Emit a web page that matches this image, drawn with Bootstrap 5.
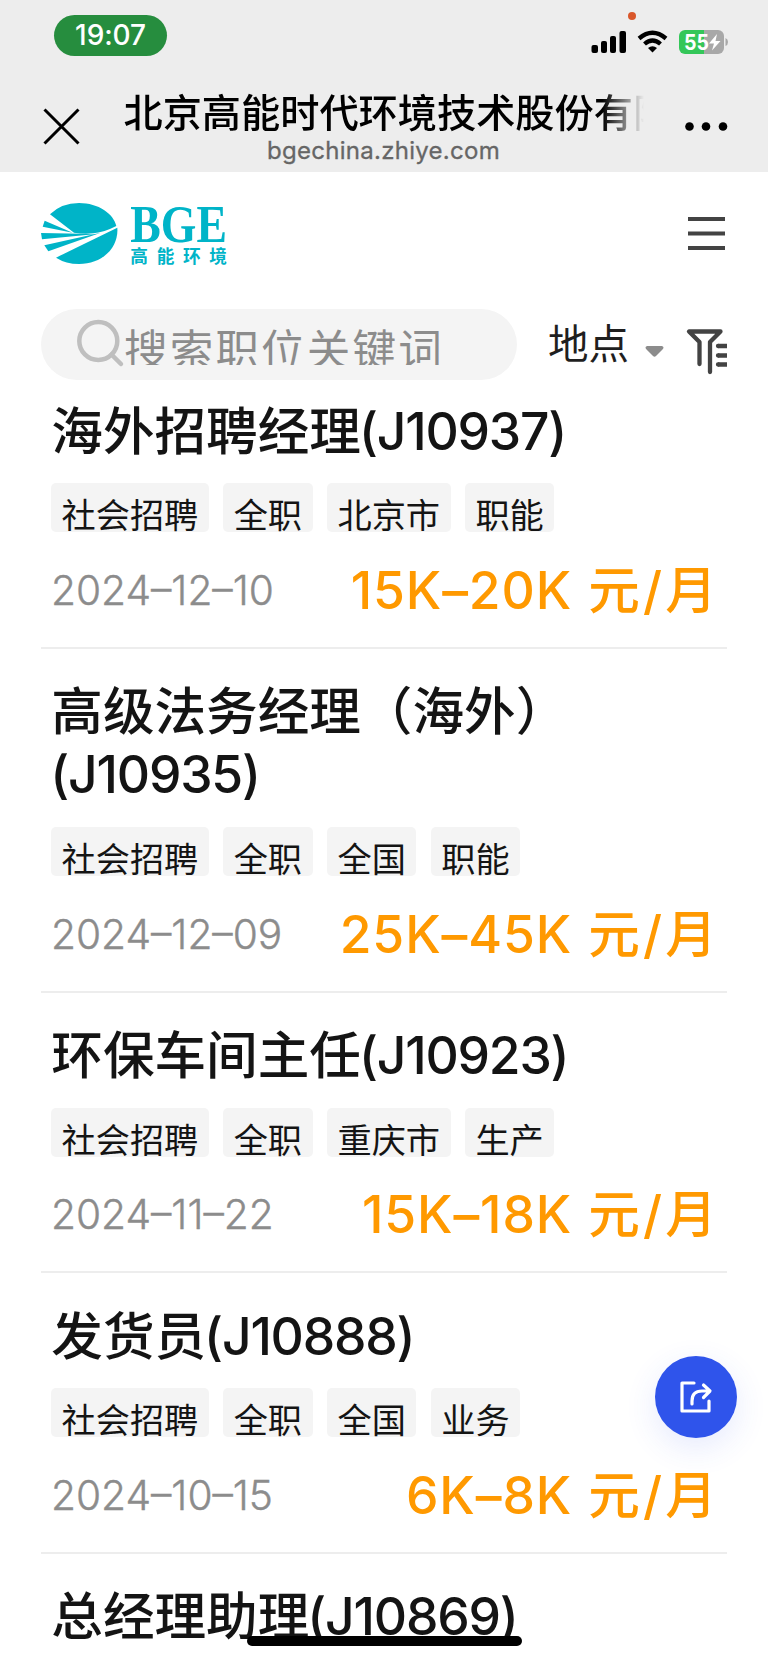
<!DOCTYPE html>
<html lang="zh-CN">
<head>
<meta charset="utf-8">
<meta name="viewport" content="width=device-width, initial-scale=1">
<title>高能环境 招聘</title>
<link href="https://cdn.jsdelivr.net/npm/bootstrap@5.3.0/dist/css/bootstrap.min.css" rel="stylesheet">
<style>
body{font-family:Inter,"Noto Sans CJK SC",sans-serif;color:#141414;background:#fff;height:1663px;overflow:hidden}
svg{display:block;flex:none;overflow:visible}
.top-area{background:#ededed;height:172px}
.status-row{height:88px;padding:15px 39px 0 54px}
.clock{width:113px;height:41px;background:#268d3e;color:#fff;font-size:28px;font-weight:500;line-height:41px;letter-spacing:-.1px}
.title-row{height:84px;padding:0 39px 0 43px}
.page-head{margin-left:4px}
.page-title{width:520px;height:50px;line-height:50px;font-size:39.2px;font-weight:500;color:#000;-webkit-mask-image:linear-gradient(90deg,#000 92%,transparent 100%);mask-image:linear-gradient(90deg,#000 92%,transparent 100%)}
.page-url{font-size:24px;line-height:25px;color:#666;letter-spacing:.28px;-webkit-text-stroke:.3px #666}
.brand-row{height:137px;padding:31px 43px 0 41px}
.search-row{height:71px;padding:0 40px 0 41px}
.search-box{width:476px;background:#f4f4f4;padding-left:36px}
.search-hint{height:56px;font-size:43.6px;letter-spacing:2.1px;line-height:83px;color:#8c8c8c;white-space:nowrap;margin-left:-1px}
.place{font-size:40.5px;line-height:60px;color:#1f1f1f;width:88px;white-space:nowrap}
.job{margin:0 41px;padding:31.3px 11px 25px 10px;border-bottom:2px solid #ededed}
.job-title{font-size:51.6px;line-height:63.3px;font-weight:500;margin:0 0 20.5px .3px}
.job-title span{letter-spacing:-1.2px;margin-left:-2px}
.job-title br+span{margin-left:-1px}
.tags{gap:14.4px;margin-bottom:26.5px}
.tag{height:49px;border-radius:5px;background:#f4f4f4;font-size:34.2px;line-height:66px;padding:0 10.5px;overflow:hidden;white-space:nowrap}
.foot{height:63px}
.date{font-size:40.7px;font-weight:300;color:#8c8c8c;line-height:63px;-webkit-text-stroke:.4px #8c8c8c}
.pay{font-size:51.6px;font-weight:500;color:#f90;line-height:63px;white-space:nowrap;letter-spacing:.9px}
.pay i{font-style:normal;margin:0 -4px 0 16px;letter-spacing:3.2px}
.fab{right:31px;top:1356px;width:82px;height:82px;background:#2f54eb;box-shadow:0 10px 32px rgba(47,84,235,.12)}
.home-bar{left:247px;top:1636px;width:275px;height:10px;background:#000}
</style>
</head>
<body class="position-relative">
<header class="top-area">
  <div class="status-row d-flex justify-content-between align-items-start">
    <div class="clock rounded-pill text-center">19:07</div>
    <svg width="140" height="46" viewBox="589 9 140 46">
      <circle cx="632" cy="10" r="4" fill="#d9572b"/>
      <rect x="591.5" y="39" width="6.5" height="8" rx="2"/><rect x="601" y="35" width="6" height="12" rx="2"/><rect x="610" y="30" width="6" height="17" rx="2"/><rect x="619.500" y="25" width="6.500" height="22" rx="2"/>
      <g fill="none" stroke="#000" stroke-width="4.300"><path d="M639 32.500Q652.500 21 666 32.500"/><path d="M644.500 38Q652.500 31 660.500 38"/></g>
      <path d="M648 42Q652.500 38.500 657 42L652.500 46.500Z"/>
      <path d="M685 24h20v24h-20a6 6 0 0 1-6-6V30a6 6 0 0 1 6-6Z" fill="#34c759"/>
      <path d="M704 24h14a6 6 0 0 1 6 6v12a6 6 0 0 1-6 6h-14Z" fill="#a8a8a8"/>
      <path d="M725.500 32q2.500 1 2.500 4t-2.500 4Z" fill="#a8a8a8"/>
      <text x="684" y="44" font-size="22" font-weight="700" fill="#fff" textLength="25" lengthAdjust="spacingAndGlyphs">55</text>
      <path d="M717 28l-8 9.500h5l-2 7 8.500-9.500h-5Z" fill="#fff"/>
    </svg>
  </div>
  <div class="title-row d-flex justify-content-between">
    <svg class="mt-3" width="37" height="44" viewBox="0 0 37 44"><path d="M1.500 5.500L35.500 39.500M35.500 5.500L1.500 39.500" stroke="#000" stroke-width="3"/></svg>
    <div class="page-head text-center">
      <div class="page-title text-start text-nowrap overflow-hidden">北京高能时代环境技术股份有限公司</div>
      <div class="page-url">bgechina.zhiye.com</div>
    </div>
    <svg class="mt-3" width="46" height="44" viewBox="0 0 46 44"><circle cx="6.500" cy="22.500" r="4.300"/><circle cx="23" cy="22.500" r="4.300"/><circle cx="40" cy="22.500" r="4.300"/></svg>
  </div>
</header>

<nav class="brand-row d-flex justify-content-between">
  <svg width="188" height="64" viewBox="123 69 564 192" fill="#00b4c8">
    <path d="M150 103Q184 69 237 69C296 69 341 102 349 138Q310 158 280 160Q250 163 222 158Z"/>
    <path d="M352 143C356 204 306 252 237 252Q198 252 168 233Q206 214 352 143Z"/>
    <path d="M134 122L218 158L128 140Z"/><path d="M123 159L290 162L126 178Z"/><path d="M133 196L302 158L145 214Z"/>
    <text x="391" y="185" font-family="Liberation Serif,serif" font-size="156" font-weight="700" textLength="290" lengthAdjust="spacingAndGlyphs">BGE</text>
    <text x="391" y="248" font-family="Noto Sans CJK SC,sans-serif" font-size="53" font-weight="700" textLength="290">高能环境</text>
  </svg>
  <svg width="37" height="50" viewBox="0 0 37 50"><path d="M0 16H37M0 30.500H37M0 45H37" stroke="#434343" stroke-width="4"/></svg>
</nav>

<div class="search-row d-flex align-items-center">
  <div class="search-box d-flex h-100 rounded-pill">
    <svg width="48" height="60" viewBox="0 0 48 60" fill="none" stroke="#bfbfbf" stroke-width="4.500"><circle cx="21.300" cy="32" r="19"/><path d="M34.500 45.500L44 55" stroke-linecap="round"/></svg>
    <div class="search-hint overflow-hidden">搜索职位关键词</div>
  </div>
  <div class="place ms-auto">地点</div>
  <svg width="92" height="71" viewBox="636 309 92 71">
    <path d="M647 346h15q3 1 0 4l-6 6q-1.500 1.500-3 0l-6-6q-3-3 0-4Z" fill="#8c8c8c"/>
    <g fill="none" stroke="#434343" stroke-width="4.300" stroke-linecap="round" stroke-linejoin="round"><path d="M699.500 364V342L689 331.500H720.500L710 342V372"/></g>
    <path d="M718 346H727M718 355.500H727M718 364.500H727" stroke="#434343" stroke-width="4.300"/><path d="M718 346h.1M718 355.500h.1M718 364.500h.1" stroke="#434343" stroke-width="4.300" stroke-linecap="round"/>
  </svg>
</div>

<main>
  <article class="job" style="padding-top:19.600px">
    <h2 class="job-title">海外招聘经理<span>(J10937)</span></h2>
    <div class="tags d-flex"><span class="tag">社会招聘</span><span class="tag">全职</span><span class="tag">北京市</span><span class="tag">职能</span></div>
    <div class="foot d-flex justify-content-between"><span class="date">2024–12–10</span><span class="pay">15K–20K<i>元/月</i></span></div>
  </article>
  <article class="job">
    <h2 class="job-title">高级法务经理（海外）<br><span>(J10935)</span></h2>
    <div class="tags d-flex"><span class="tag">社会招聘</span><span class="tag">全职</span><span class="tag">全国</span><span class="tag">职能</span></div>
    <div class="foot d-flex justify-content-between"><span class="date">2024–12–09</span><span class="pay">25K–45K<i>元/月</i></span></div>
  </article>
  <article class="job">
    <h2 class="job-title">环保车间主任<span>(J10923)</span></h2>
    <div class="tags d-flex"><span class="tag">社会招聘</span><span class="tag">全职</span><span class="tag">重庆市</span><span class="tag">生产</span></div>
    <div class="foot d-flex justify-content-between"><span class="date">2024–11–22</span><span class="pay">15K–18K<i>元/月</i></span></div>
  </article>
  <article class="job">
    <h2 class="job-title">发货员<span>(J10888)</span></h2>
    <div class="tags d-flex"><span class="tag">社会招聘</span><span class="tag">全职</span><span class="tag">全国</span><span class="tag">业务</span></div>
    <div class="foot d-flex justify-content-between"><span class="date">2024–10–15</span><span class="pay">6K–8K<i>元/月</i></span></div>
  </article>
  <article class="job border-0">
    <h2 class="job-title">总经理助理<span>(J10869)</span></h2>
  </article>
</main>

<button class="fab position-absolute border-0 rounded-circle p-0 d-flex align-items-center justify-content-center" type="button" aria-label="分享">
  <svg width="34" height="34" viewBox="0 0 34 34" fill="none" stroke="#fff" stroke-width="3.200" stroke-linecap="round" stroke-linejoin="round"><path d="M15 3H3V31H30V21M13 24V21Q13 11 23 11H30M24.500 5L31 11L24.500 17.500"/></svg>
</button>
<div class="home-bar position-absolute rounded-pill"></div>
<script src="https://cdn.jsdelivr.net/npm/bootstrap@5.3.0/dist/js/bootstrap.bundle.min.js"></script>
</body>
</html>
